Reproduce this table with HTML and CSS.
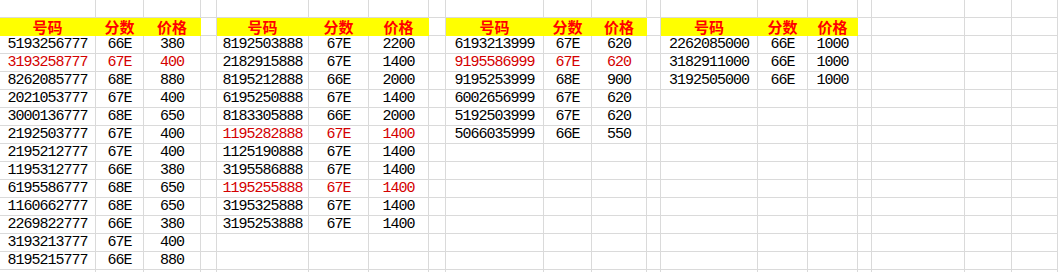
FILE: index.html
```html
<!DOCTYPE html>
<html lang="zh">
<head>
<meta charset="utf-8">
<title>号码</title>
<link rel="stylesheet" href="styles.css">
</head>
<body>
<div class="sheet">
<div class="row"><span></span><span></span><span></span><span></span><span></span><span></span><span></span><span></span><span></span><span></span><span></span><span></span><span></span><span></span><span></span><span></span><span></span><span></span><span></span></div>
<div class="row"><span class="h">号码</span><span class="h">分数</span><span class="h">价格</span><span></span><span class="h">号码</span><span class="h">分数</span><span class="h">价格</span><span></span><span class="h">号码</span><span class="h">分数</span><span class="h">价格</span><span></span><span class="h">号码</span><span class="h">分数</span><span class="h">价格</span><span></span><span></span><span></span><span></span></div>
<div class="row"><span>5193256777</span><span>66E</span><span>380</span><span></span><span>8192503888</span><span>67E</span><span>2200</span><span></span><span>6193213999</span><span>67E</span><span>620</span><span></span><span>2262085000</span><span>66E</span><span>1000</span><span></span><span></span><span></span><span></span></div>
<div class="row"><span class="r">3193258777</span><span class="r">67E</span><span class="r">400</span><span></span><span>2182915888</span><span>67E</span><span>1400</span><span></span><span class="r">9195586999</span><span class="r">67E</span><span class="r">620</span><span></span><span>3182911000</span><span>66E</span><span>1000</span><span></span><span></span><span></span><span></span></div>
<div class="row"><span>8262085777</span><span>68E</span><span>880</span><span></span><span>8195212888</span><span>66E</span><span>2000</span><span></span><span>9195253999</span><span>68E</span><span>900</span><span></span><span>3192505000</span><span>66E</span><span>1000</span><span></span><span></span><span></span><span></span></div>
<div class="row"><span>2021053777</span><span>67E</span><span>400</span><span></span><span>6195250888</span><span>67E</span><span>1400</span><span></span><span>6002656999</span><span>67E</span><span>620</span><span></span><span></span><span></span><span></span><span></span><span></span><span></span><span></span></div>
<div class="row"><span>3000136777</span><span>68E</span><span>650</span><span></span><span>8183305888</span><span>66E</span><span>2000</span><span></span><span>5192503999</span><span>67E</span><span>620</span><span></span><span></span><span></span><span></span><span></span><span></span><span></span><span></span></div>
<div class="row"><span>2192503777</span><span>67E</span><span>400</span><span></span><span class="r">1195282888</span><span class="r">67E</span><span class="r">1400</span><span></span><span>5066035999</span><span>66E</span><span>550</span><span></span><span></span><span></span><span></span><span></span><span></span><span></span><span></span></div>
<div class="row"><span>2195212777</span><span>67E</span><span>400</span><span></span><span>1125190888</span><span>67E</span><span>1400</span><span></span><span></span><span></span><span></span><span></span><span></span><span></span><span></span><span></span><span></span><span></span><span></span></div>
<div class="row"><span>1195312777</span><span>66E</span><span>380</span><span></span><span>3195586888</span><span>67E</span><span>1400</span><span></span><span></span><span></span><span></span><span></span><span></span><span></span><span></span><span></span><span></span><span></span><span></span></div>
<div class="row"><span>6195586777</span><span>68E</span><span>650</span><span></span><span class="r">1195255888</span><span class="r">67E</span><span class="r">1400</span><span></span><span></span><span></span><span></span><span></span><span></span><span></span><span></span><span></span><span></span><span></span><span></span></div>
<div class="row"><span>1160662777</span><span>68E</span><span>650</span><span></span><span>3195325888</span><span>67E</span><span>1400</span><span></span><span></span><span></span><span></span><span></span><span></span><span></span><span></span><span></span><span></span><span></span><span></span></div>
<div class="row"><span>2269822777</span><span>66E</span><span>380</span><span></span><span>3195253888</span><span>67E</span><span>1400</span><span></span><span></span><span></span><span></span><span></span><span></span><span></span><span></span><span></span><span></span><span></span><span></span></div>
<div class="row"><span>3193213777</span><span>67E</span><span>400</span><span></span><span></span><span></span><span></span><span></span><span></span><span></span><span></span><span></span><span></span><span></span><span></span><span></span><span></span><span></span><span></span></div>
<div class="row"><span>8195215777</span><span>66E</span><span>880</span><span></span><span></span><span></span><span></span><span></span><span></span><span></span><span></span><span></span><span></span><span></span><span></span><span></span><span></span><span></span><span></span></div>
<div class="row"><span></span><span></span><span></span><span></span><span></span><span></span><span></span><span></span><span></span><span></span><span></span><span></span><span></span><span></span><span></span><span></span><span></span><span></span><span></span></div>
</div>
</body>
</html>
```

FILE: styles.css
```css
html, body {
  margin: 0;
  padding: 0;
  background: #ffffff;
}

.sheet {
  width: 1058px;
  height: 272px;
  overflow: hidden;
}

.row {
  display: grid;
  grid-template-columns: 96px 48px 57px 16px 92px 60px 60px 17px 98px 48px 55px 14px 97px 50px 50px 14px 93px 47px 46px;
  height: 18px;
}

.row > span {
  box-sizing: border-box;
  height: 18px;
  border-right: 1px solid #dadada;
  border-bottom: 1px solid #dadada;
  text-align: center;
  font-family: "Liberation Mono", monospace;
  font-size: 15px;
  line-height: 18px;
  letter-spacing: -1px;
  color: #000000;
  white-space: nowrap;
}

.row > .h {
  background: #ffff00;
  border-right-color: #ffff00;
  border-bottom-color: #ffff00;
  color: #ff0000;
  font-family: "Noto Sans CJK SC", sans-serif;
  font-weight: bold;
  font-size: 15px;
  line-height: 17px;
  letter-spacing: 0;
}

.row > .r {
  color: #d40000;
}
```
